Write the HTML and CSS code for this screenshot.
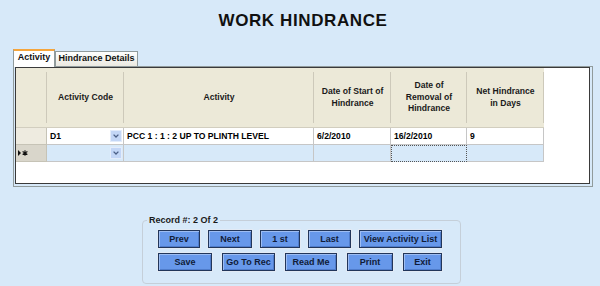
FILE: index.html
```html
<!DOCTYPE html>
<html>
<head>
<meta charset="utf-8">
<title>Work Hindrance</title>
<link rel="stylesheet" href="styles.css">
</head>
<body>
<h1 class="title">WORK HINDRANCE</h1>
<div class="tabctl">
  <div class="tabs">
    <div class="tab tab-active">Activity</div>
    <div class="tab tab-idle">Hindrance Details</div>
  </div>
  <div class="page">
    <div class="subform">
      <div class="grid">
        <div class="hc"></div>
        <div class="hc">Activity Code</div>
        <div class="hc">Activity</div>
        <div class="hc">Date of Start of<br>Hindrance</div>
        <div class="hc">Date of<br>Removal of<br>Hindrance</div>
        <div class="hc">Net Hindrance<br>in Days</div>

        <div class="rs"></div>
        <div class="c combo"><span>D1</span><span class="drop"><svg width="6" height="4" viewBox="0 0 6 4"><path d="M0.6 0.6 L3 3 L5.4 0.6" stroke="#4b5f86" stroke-width="1.3" fill="none"/></svg></span></div>
        <div class="c">PCC 1 : 1 : 2 UP TO PLINTH LEVEL</div>
        <div class="c">6/2/2010</div>
        <div class="c">16/2/2010</div>
        <div class="c">9</div>

        <div class="rs rs-new"><svg width="11" height="6" viewBox="0 0 11 6"><path d="M0 0 L3 3 L0 6 Z" fill="#111"/><path d="M7 0.3 V5.7 M4.6 1.6 L9.4 4.4 M4.6 4.4 L9.4 1.6" stroke="#111" stroke-width="1.1"/></svg></div>
        <div class="c c-new combo"><span></span><span class="drop"><svg width="6" height="4" viewBox="0 0 6 4"><path d="M0.6 0.6 L3 3 L5.4 0.6" stroke="#4b5f86" stroke-width="1.3" fill="none"/></svg></span></div>
        <div class="c c-new"></div>
        <div class="c c-new"></div>
        <div class="c c-new focus"></div>
        <div class="c c-new"></div>
      </div>
    </div>
  </div>
</div>

<fieldset class="nav">
  <legend>Record #: 2 Of 2</legend>
  <div class="rows">
    <div class="row row1">
      <button class="btn w42">Prev</button>
      <button class="btn w44">Next</button>
      <button class="btn w40">1 st</button>
      <button class="btn w43">Last</button>
      <button class="btn w83">View Activity List</button>
    </div>
    <div class="row row2">
      <button class="btn w54">Save</button>
      <button class="btn w53">Go To Rec</button>
      <button class="btn w52">Read Me</button>
      <button class="btn w46">Print</button>
      <button class="btn w39">Exit</button>
    </div>
  </div>
</fieldset>
</body>
</html>
```

FILE: styles.css
```css
* { box-sizing: border-box; }

body {
  margin: 0;
  background: #d7e9f9;
  font-family: "Liberation Sans", Arial, sans-serif;
  color: #000;
}

.title {
  margin: 0;
  padding: 11px 0 0 6px;
  height: 31px;
  font-size: 17px;
  line-height: 20px;
  font-weight: bold;
  text-align: center;
  letter-spacing: 0.6px;
  color: #111;
}

.tabctl {
  margin: 18px 0 0 13px;
  width: 580px;
}

.tabs {
  display: flex;
  align-items: flex-end;
  height: 17px;
}

.tab {
  font-size: 9px;
  font-weight: bold;
  color: #111;
  text-align: center;
  line-height: 13px;
}

.tab-active {
  position: relative;
  z-index: 1;
  width: 42px;
  height: 18px;
  margin-bottom: -1px;
  background: #fff;
  border: 1px solid #919b9c;
  border-top: 2px solid #f5a53c;
  border-bottom: none;
}

.tab-idle {
  width: 83px;
  height: 15px;
  background: linear-gradient(#fefefe, #ebe9e1);
  border: 1px solid #919b9c;
  border-bottom: none;
}

.page {
  border: 1px solid #919b9c;
  padding: 0 2px 2px 1px;
  height: 121px;
}

.subform {
  border: 1px solid #3a3a3a;
  background: #fff;
  height: 117px;
}

.grid {
  display: grid;
  grid-template-columns: 31px 77px 190px 77px 76px 77px;
  grid-template-rows: 60px 17px 17px;
  width: 528px;
  font-size: 8.6px;
  font-weight: bold;
}

.hc {
  background:
    linear-gradient(#cdc9ba, #cdc9ba) right 0 top 4px / 1px calc(100% - 8px) no-repeat,
    #ece9d8;
  border-bottom: 1px solid #d2cebf;
  display: flex;
  align-items: center;
  justify-content: center;
  text-align: center;
  line-height: 11.5px;
  color: #1a1a1a;
}

.c {
  border-right: 1px solid #c6c6c6;
  border-bottom: 1px solid #c6c6c6;
  padding-left: 3px;
  display: flex;
  align-items: center;
  background: #fff;
  white-space: nowrap;
}

.c-new { background: #d7e9f9; }

.focus { border: 1px dotted #555; }

.rs {
  background: #eeebe0;
  border-right: 1px solid #c6c3b6;
  border-bottom: 1px solid #c6c3b6;
  display: flex;
  align-items: center;
  padding-left: 2px;
}

.rs-new { background: #d9d6cb; }

.combo {
  justify-content: space-between;
  padding-right: 1px;
}

.drop {
  width: 12px;
  height: 12px;
  background: #c3d6f6;
  border: 1px solid #e3ecfb;
  display: flex;
  align-items: center;
  justify-content: center;
}

.nav {
  margin: 28px 0 0 142px;
  width: 319px;
  min-width: 0;
  border: 1px solid #c5cfd9;
  border-radius: 4px;
  padding: 0;
}

.nav legend {
  margin-left: 4px;
  padding: 0 2px;
  font-size: 9px;
  font-weight: bold;
  line-height: 10px;
  color: #1a1a1a;
}

.rows {
  padding: 5px 0 12px 15px;
  display: flex;
  flex-direction: column;
  gap: 5px;
}

.row { display: flex; }
.row1 { gap: 8px; }
.row2 { gap: 10px; }

.btn {
  height: 18px;
  padding: 0;
  border: 1px solid #22365a;
  background: #6798ea;
  box-shadow: 0 0 0 1px #e2eaf4, inset 1px 1px 0 #9dbdf3, inset -1px -1px 0 #4f7ccb;
  font-family: "Liberation Sans", Arial, sans-serif;
  font-size: 9px;
  font-weight: bold;
  color: #101c38;
}

.w39 { width: 39px; }
.w40 { width: 40px; }
.w42 { width: 42px; }
.w43 { width: 43px; }
.w44 { width: 44px; }
.w46 { width: 46px; }
.w52 { width: 52px; }
.w53 { width: 53px; }
.w54 { width: 54px; }
.w83 { width: 83px; }
```
